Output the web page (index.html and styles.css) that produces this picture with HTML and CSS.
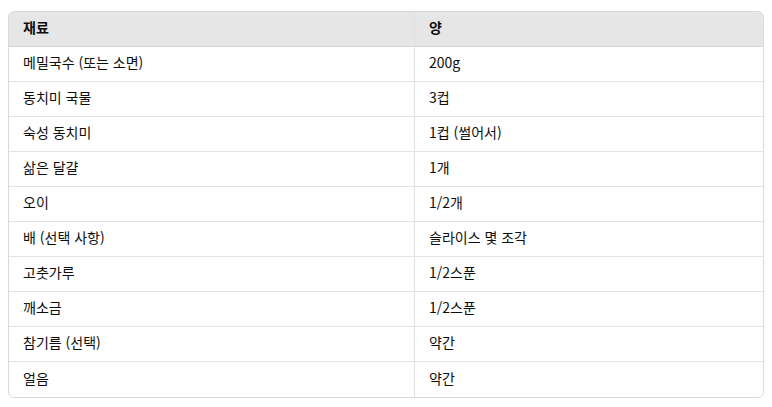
FILE: index.html
```html
<!DOCTYPE html>
<html lang="ko">
<head>
<meta charset="utf-8">
<link rel="stylesheet" href="styles.css">
</head>
<body>
<div class="wrap">
<table class="tbl">
<thead>
<tr><th class="c1">재료</th><th>양</th></tr>
</thead>
<tbody>
<tr><td class="c1">메밀국수 (또는 소면)</td><td>200g</td></tr>
<tr><td class="c1">동치미 국물</td><td>3컵</td></tr>
<tr><td class="c1">숙성 동치미</td><td>1컵 (썰어서)</td></tr>
<tr><td class="c1">삶은 달걀</td><td>1개</td></tr>
<tr><td class="c1">오이</td><td>1/2개</td></tr>
<tr><td class="c1">배 (선택 사항)</td><td>슬라이스 몇 조각</td></tr>
<tr><td class="c1">고춧가루</td><td>1/2스푼</td></tr>
<tr><td class="c1">깨소금</td><td>1/2스푼</td></tr>
<tr><td class="c1">참기름 (선택)</td><td>약간</td></tr>
<tr><td class="c1">얼음</td><td>약간</td></tr>
</tbody>
</table>
</div>
</body>
</html>
```
FILE: styles.css
```css
html, body {
  margin: 0;
  padding: 0;
  background: #fff;
}
.wrap {
  padding: 11px 8px 0 8px;
}
.tbl {
  width: 756px;
  border-collapse: separate;
  border-spacing: 0;
  border: 1px solid #d9d9d9;
  border-radius: 6px;
  overflow: hidden;
  font-family: "Noto Sans CJK KR", "Noto Sans", sans-serif;
  font-size: 14px;
  color: #0d0d0d;
}
.tbl th, .tbl td {
  height: 35px;
  padding: 0 14px 4px 14px;
  text-align: left;
  vertical-align: middle;
  box-sizing: border-box;
}
.tbl th {
  background: #e6e6e6;
  font-weight: 700;
  border-bottom: 1px solid #d4d4d4;
}
.tbl td {
  border-bottom: 1px solid #e3e3e3;
}
.tbl tbody tr:last-child td {
  border-bottom: none;
}
.tbl .c1 {
  width: 406px;
  border-right: 1px solid #e0e0e0;
}
```
